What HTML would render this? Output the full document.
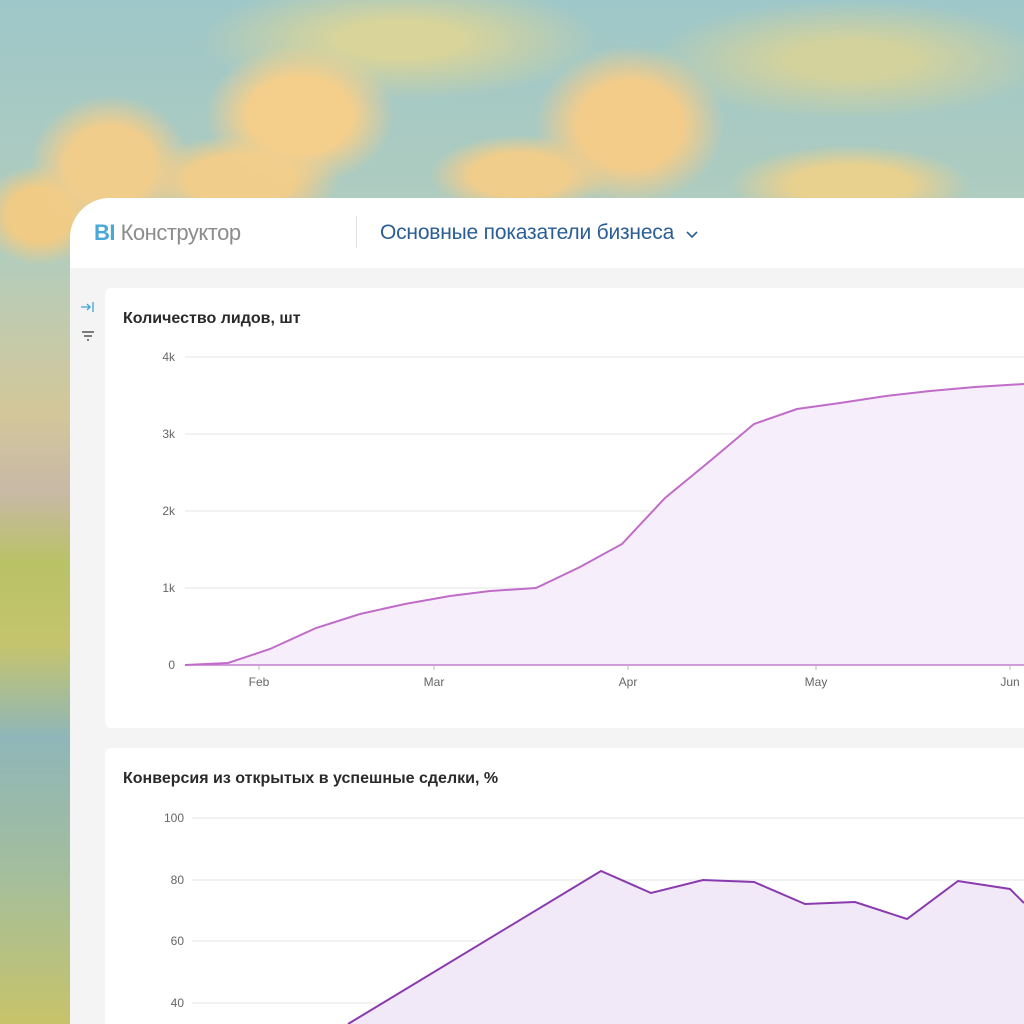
<!DOCTYPE html>
<html><head><meta charset="utf-8"><style>
html,body{margin:0;padding:0;width:1024px;height:1024px;overflow:hidden}
body{position:relative;font-family:"Liberation Sans","DejaVu Sans",sans-serif;
background:
radial-gradient(ellipse 95px 70px at 300px 115px,#f4cf8c 55%,transparent 100%),
radial-gradient(ellipse 95px 80px at 630px 125px,#f3cc8a 55%,transparent 100%),
radial-gradient(ellipse 80px 70px at 110px 165px,#f1cd8c 55%,transparent 100%),
radial-gradient(ellipse 60px 50px at 40px 215px,#efcb86 55%,transparent 100%),
radial-gradient(ellipse 100px 45px at 240px 180px,#f0cd8b 55%,transparent 100%),
radial-gradient(ellipse 90px 40px at 520px 175px,#f0cd8b 55%,transparent 100%),
radial-gradient(ellipse 120px 40px at 850px 185px,#e8d08f 50%,transparent 100%),
radial-gradient(ellipse 200px 60px at 400px 40px,#d9d49a 30%,transparent 100%),
radial-gradient(ellipse 200px 60px at 850px 60px,#d4d29c 30%,transparent 100%),
linear-gradient(180deg,#9ec7c9 0%,#b3cdbc 25%,#d3c79a 40%,#c8b9a6 48%,#b9c266 55%,#c5c46e 63%,#8fb6b8 72%,#a3be9e 85%,#c7c36a 100%);}
.win{position:absolute;left:70px;top:198px;width:954px;height:826px;background:#f4f4f5;border-top-left-radius:40px;overflow:hidden}
.hdr{height:70px;background:#fff;position:relative}
.logo{position:absolute;left:24px;top:22px;font-size:22px;color:#8c8c8c;letter-spacing:-0.5px}
.logo b{color:#4aa8d8;font-weight:bold}
.sep{position:absolute;left:286px;top:18px;width:1px;height:32px;background:#e2e2e2}
.title{position:absolute;left:310px;top:23px;font-size:21px;color:#2b5e94;letter-spacing:-0.2px}
.card{position:absolute;left:35px;width:919px;background:#fff;border-radius:6px 0 0 6px}
.ct{position:absolute;left:18px;font-size:16px;font-weight:bold;color:#2a2a2a}
svg text{font-family:"Liberation Sans",sans-serif;font-size:12px;fill:#666}
</style></head><body>
<div class="win">
<div class="hdr"><div class="logo"><b>BI</b> Конструктор</div><div class="sep"></div>
<div class="title">Основные показатели бизнеса <span style="display:inline-block;margin-left:6px"><svg width="12" height="8" viewBox="0 0 12 8"><path d="M1 1l5 5 5-5" fill="none" stroke="#2b5e94" stroke-width="1.6"/></svg></span></div></div>
<svg style="position:absolute;left:10px;top:103px" width="16" height="48"><path d="M1 6h9M7 3l3 3-3 3M13 1v10" stroke="#3ba3d6" stroke-width="1.3" fill="none"/><path d="M2 31h12M4 35h8M7 39h2" stroke="#555" stroke-width="1.5"/></svg>
<div class="card" style="top:90px;height:440px"><div class="ct" style="top:22px">Количество лидов, шт</div></div>
<div class="card" style="top:550px;height:276px;border-radius:6px 0 0 0"><div class="ct" style="top:22px">Конверсия из открытых в успешные сделки, %</div></div>
</div>
<svg style="position:absolute;left:0;top:0" width="1024" height="1024">
<g stroke="#e6e6e6" stroke-width="1"><path d="M185 357H1024M185 434H1024M185 511H1024M185 588H1024M192 818H1024M192 880H1024M192 941H1024M192 1003H1024"/></g>
<text x="175" y="361" text-anchor="end">4k</text><text x="175" y="438" text-anchor="end">3k</text><text x="175" y="515" text-anchor="end">2k</text><text x="175" y="592" text-anchor="end">1k</text><text x="175" y="669" text-anchor="end">0</text>
<text x="259" y="686" text-anchor="middle">Feb</text><text x="434" y="686" text-anchor="middle">Mar</text><text x="628" y="686" text-anchor="middle">Apr</text><text x="816" y="686" text-anchor="middle">May</text><text x="1010" y="686" text-anchor="middle">Jun</text>
<path d="M185 665L228 663 270 649 316 628 360 614 405 604 450 596 490 591 536 588 580 567 622 544 665 498 710 461 754 424 797 409 840 403 886 396 930 391 975 387 1024 384V665Z" fill="#f6effb"/>
<path d="M185 665H1024" stroke="#c47fd0" stroke-width="1.5"/>
<path d="M185 665L228 663 270 649 316 628 360 614 405 604 450 596 490 591 536 588 580 567 622 544 665 498 710 461 754 424 797 409 840 403 886 396 930 391 975 387 1024 384" fill="none" stroke="#c06cc8" stroke-width="2"/>
<g stroke="#bbb"><path d="M259 665v5M434 665v5M628 665v5M816 665v5M1010 665v5"/></g>
<text x="184" y="822" text-anchor="end">100</text><text x="184" y="884" text-anchor="end">80</text><text x="184" y="945" text-anchor="end">60</text><text x="184" y="1007" text-anchor="end">40</text>
<path d="M348 1024L601 871 651 893 703 880 754 882 805 904 855 902 907 919 958 881 1010 889 1024 903V1024Z" fill="#f1e9f7"/>
<path d="M348 1024L601 871 651 893 703 880 754 882 805 904 855 902 907 919 958 881 1010 889 1024 903" fill="none" stroke="#8a3aae" stroke-width="2"/>
</svg>
</body></html>
